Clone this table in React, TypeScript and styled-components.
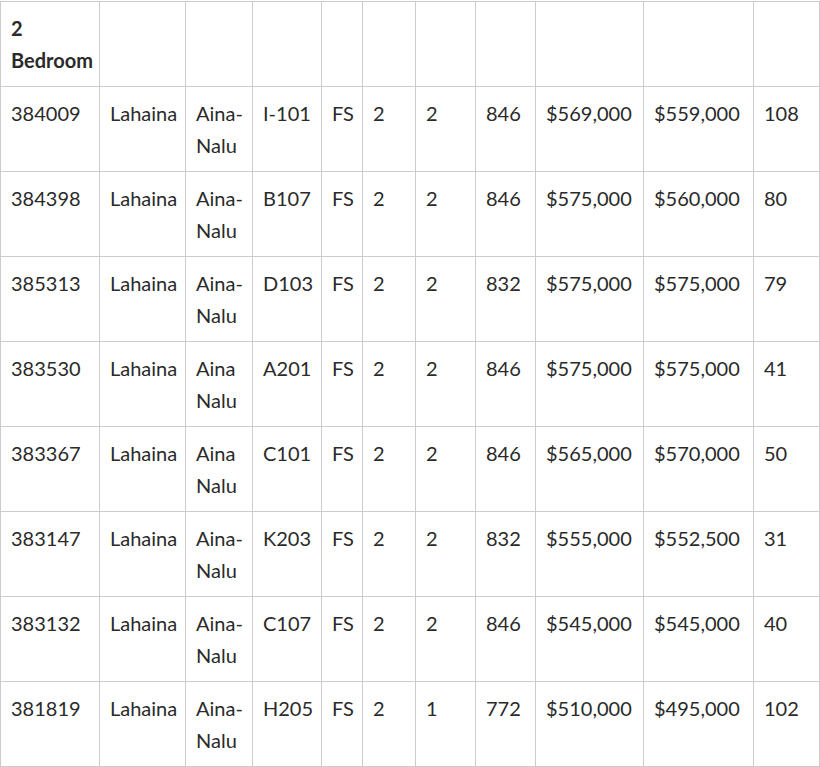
import React from 'react';
import styled, { createGlobalStyle } from 'styled-components';

type Listing = {
    mls: string;
    area: string;
    complex: string;
    unit: string;
    tenure: string;
    beds: string;
    baths: string;
    sqft: string;
    listPrice: string;
    soldPrice: string;
    dom: string;
}

const colWidths = [99, 86, 67, 69, 41, 53, 60, 60, 108, 110, 66];

const listings: Listing[] = [
    { mls: '384009', area: 'Lahaina', complex: 'Aina-Nalu', unit: 'I-101', tenure: 'FS', beds: '2', baths: '2', sqft: '846', listPrice: '$569,000', soldPrice: '$559,000', dom: '108' },
    { mls: '384398', area: 'Lahaina', complex: 'Aina-Nalu', unit: 'B107', tenure: 'FS', beds: '2', baths: '2', sqft: '846', listPrice: '$575,000', soldPrice: '$560,000', dom: '80' },
    { mls: '385313', area: 'Lahaina', complex: 'Aina-Nalu', unit: 'D103', tenure: 'FS', beds: '2', baths: '2', sqft: '832', listPrice: '$575,000', soldPrice: '$575,000', dom: '79' },
    { mls: '383530', area: 'Lahaina', complex: 'Aina Nalu', unit: 'A201', tenure: 'FS', beds: '2', baths: '2', sqft: '846', listPrice: '$575,000', soldPrice: '$575,000', dom: '41' },
    { mls: '383367', area: 'Lahaina', complex: 'Aina Nalu', unit: 'C101', tenure: 'FS', beds: '2', baths: '2', sqft: '846', listPrice: '$565,000', soldPrice: '$570,000', dom: '50' },
    { mls: '383147', area: 'Lahaina', complex: 'Aina-Nalu', unit: 'K203', tenure: 'FS', beds: '2', baths: '2', sqft: '832', listPrice: '$555,000', soldPrice: '$552,500', dom: '31' },
    { mls: '383132', area: 'Lahaina', complex: 'Aina-Nalu', unit: 'C107', tenure: 'FS', beds: '2', baths: '2', sqft: '846', listPrice: '$545,000', soldPrice: '$545,000', dom: '40' },
    { mls: '381819', area: 'Lahaina', complex: 'Aina-Nalu', unit: 'H205', tenure: 'FS', beds: '2', baths: '1', sqft: '772', listPrice: '$510,000', soldPrice: '$495,000', dom: '102' },
];

const fields: (keyof Listing)[] = ['mls', 'area', 'complex', 'unit', 'tenure', 'beds', 'baths', 'sqft', 'listPrice', 'soldPrice', 'dom'];

const App = () => {
    return (
        <>
            <GlobalStyle />
            <SalesTable>
                <colgroup>
                    {colWidths.map((w, i) => <Col key={i} w={w} />)}
                </colgroup>
                <thead>
                    <tr>
                        <HeadCell>2 Bedroom</HeadCell>
                        {fields.slice(1).map(f => <HeadCell key={f}></HeadCell>)}
                    </tr>
                </thead>
                <tbody>
                    {listings.map(row => (
                        <tr key={row.mls}>
                            {fields.map(f => <Cell key={f}>{row[f]}</Cell>)}
                        </tr>
                    ))}
                </tbody>
            </SalesTable>
        </>
    );
}


// styled-components
const GlobalStyle = createGlobalStyle`
    body {
        margin: 0;
        padding-top: 1px;
        background: #fff;
        font-family: Lato, "Open Sans", sans-serif;
    }
`;

const SalesTable = styled.table`
    width: 820px;
    table-layout: fixed;
    border-collapse: collapse;
    color: #2a2a2a;
    font-size: 20px;
    line-height: 32px;
`;

const Col = styled.col<{ w: number }>`
    width: ${p => p.w}px;
`;

const HeadCell = styled.th`
    border: 1px solid #ccc;
    padding: 10px;
    vertical-align: top;
    text-align: left;
    font-weight: 700;
`;

const Cell = styled.td`
    border: 1px solid #ccc;
    padding: 10px;
    vertical-align: top;
    text-align: left;
`;

export default App;
